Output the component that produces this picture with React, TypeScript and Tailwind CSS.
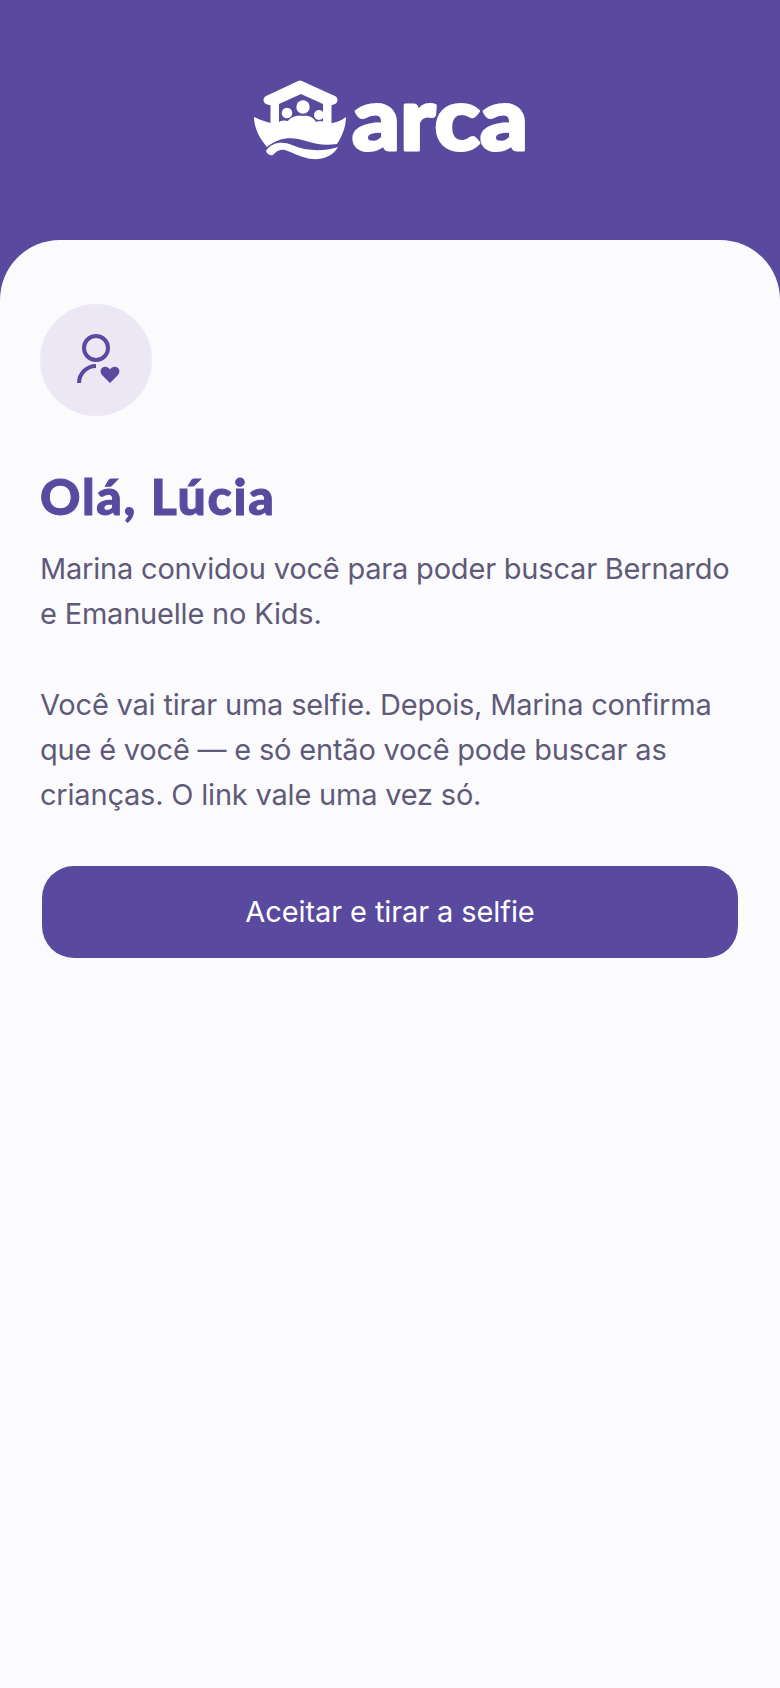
function ArcaLogo() {
  return (
    <svg width="276" height="116" viewBox="0 -20 276 116" fill="none">
      {/* boat cabin */}
      <path d="M48 7 L16 22 L23 24 V48 H75 V24 L81 22 Z" fill="#fff" stroke="#fff" strokeWidth="9" strokeLinejoin="round" />
      <path d="M49 16 L27 26 V46 H71 V26 Z" fill="#5A4A9F" />
      <circle cx="51" cy="29" r="6.7" fill="#fff" />
      <circle cx="35" cy="35" r="5.3" fill="#fff" />
      <circle cx="67" cy="37" r="5" fill="#fff" />
      {/* hull, the top edge follows the shoulders */}
      <path
        d="M2 39 C8 42 17 45 25 46 C28 42 32 42 36 43 C39 38 46 37 51 38 C57 37 62 40 64 44 C68 42 72 43 76 46 C82 45 89 43 94 39 C94 47 91 57 85 66 C73 68 64 66 54 63 C42 59 28 58 15 69 C8 61 2 50 2 39 Z"
        fill="#fff"
      />
      {/* wave under the hull */}
      <path
        d="M14 73 C20 64 30 63 40 67 C54 73 70 74 86 69 C82 77 72 82 60 81 C50 80 42 75 33 72 C27 71 24 74 21 77 C18 78 15 76 14 73 Z"
        fill="#fff"
      />
      <text
        x="100"
        y="72"
        fill="#fff"
        stroke="#fff"
        strokeWidth="3"
        strokeLinejoin="round"
        fontFamily="Lato, sans-serif"
        fontWeight="900"
        fontSize="88"
        textLength="176"
        lengthAdjust="spacingAndGlyphs"
      >
        arca
      </text>
    </svg>
  );
}

function GuestIcon() {
  return (
    <svg width="56" height="56" viewBox="0 0 56 56" fill="none">
      <circle cx="28" cy="16" r="12" stroke="#5A4A9F" strokeWidth="4" />
      <path d="M11 51 A 17 17 0 0 1 28 34" stroke="#5A4A9F" strokeWidth="4" />
      <path
        d="M42 51 L35 44 C32 41 32 38 34 36 C36.5 34 40 34.5 42 37.5 C44 34.5 47.5 34 50 36 C52 38 52 41 49 44 Z"
        fill="#5A4A9F"
      />
    </svg>
  );
}

export default function App() {
  return (
    <div className="min-h-[1688px] bg-[#5A4A9F] font-['Inter',sans-serif] [font-variant-ligatures:none]">
      <header className="flex h-[240px] items-start justify-center pt-[58px]">
        <ArcaLogo />
      </header>

      <main className="h-[1448px] rounded-t-[60px] bg-[#FBFBFE] px-10 pt-16">
        <div className="flex h-28 w-28 items-center justify-center rounded-full bg-[#EBE8F4]">
          <GuestIcon />
        </div>

        <h1 className="mt-[50px] font-['Lato',sans-serif] text-[50px] leading-[60px] font-black tracking-[1.7px] text-[#5A4A9F] [-webkit-text-stroke:1px_#5A4A9F]">
          Olá, Lúcia
        </h1>

        <p className="mt-[20px] text-[29px] leading-[45px] tracking-[-0.2px] text-[#5F5A78]">
          Marina convidou você para poder buscar Bernardo e Emanuelle no Kids.
        </p>
        <p className="mt-[46px] text-[29px] leading-[45px] tracking-[-0.2px] text-[#5F5A78]">
          Você vai tirar uma selfie. Depois, Marina confirma que é você — e só então você pode buscar as crianças. O
          link vale uma vez só.
        </p>

        <button className="mt-[49px] ml-[2px] flex h-[92px] w-[696px] items-center justify-center rounded-[32px] bg-[#5A4A9F] text-[29px] tracking-[-0.1px] text-white">
          Aceitar e tirar a selfie
        </button>
      </main>
    </div>
  );
}
